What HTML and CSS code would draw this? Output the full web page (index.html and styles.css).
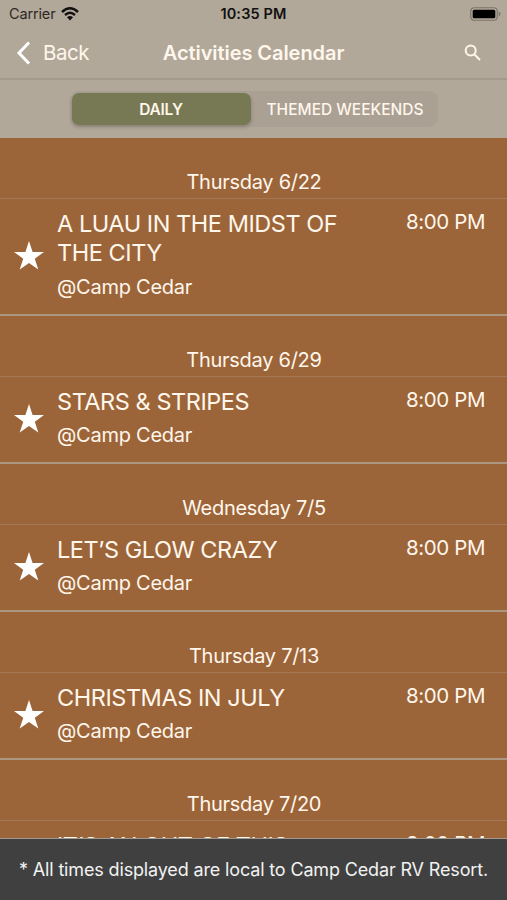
FILE: index.html
```html
<!DOCTYPE html>
<html lang="en">
<head>
    <meta charset="UTF-8">
    <meta name="viewport" content="width=device-width, initial-scale=1.0">
    <title>Activities Calendar</title>
    <link rel="stylesheet" href="styles.css">
</head>
<body>
    <svg class="sprite" width="0" height="0">
        <symbol id="star" viewBox="0 0 30 29">
            <path d="M15 0 L18.6 10.9 H30 L20.8 17.7 L24.3 28.6 L15 21.9 L5.7 28.6 L9.2 17.7 L0 10.9 H11.4 Z"/>
        </symbol>
    </svg>

    <div class="screen">
        <div class="status-bar">
            <div class="carrier">
                <span class="carrier-name">Carrier</span>
                <svg class="wifi" viewBox="0 0 18 14" width="18" height="14">
                    <path d="M1 5 Q9 -2.4 17 5" />
                    <path d="M4 8 Q9 3.4 14 8" />
                    <path class="dot" d="M6 10.3 Q9 7.6 12 10.3 L9 13.5 Z" />
                </svg>
            </div>
            <span class="clock">10:35 PM</span>
            <svg class="battery" viewBox="0 0 31 14" width="31" height="14">
                <rect class="shell" x="0.75" y="0.75" width="26.5" height="12.5" rx="3.5"/>
                <rect x="2.7" y="2.7" width="22.6" height="8.6" rx="1.5"/>
                <path class="cap" d="M28.7 4.5 Q30.5 5.3 30.5 7 Q30.5 8.7 28.7 9.5 Z"/>
            </svg>
        </div>

        <header class="nav-bar">
            <a class="back">
                <svg viewBox="0 0 15 24" width="15" height="24"><path d="M13 1.5 L3 12 L13 22.5"/></svg>
                <span>Back</span>
            </a>
            <h1>Activities Calendar</h1>
            <svg class="search" viewBox="0 0 17 17" width="17" height="17">
                <circle cx="6.7" cy="6.5" r="5"/>
                <path d="M10.3 10.3 L16 16"/>
            </svg>
        </header>

        <div class="tab-bar">
            <div class="segments">
                <span class="segment active">DAILY</span>
                <span class="segment">THEMED WEEKENDS</span>
            </div>
        </div>

        <main class="list">
            <section>
                <h2>Thursday 6/22</h2>
                <div class="event tall">
                    <svg class="star"><use href="#star"/></svg>
                    <div class="info">
                        <h3>A LUAU IN THE MIDST OF THE CITY</h3>
                        <p>@Camp Cedar</p>
                    </div>
                    <span class="time">8:00 PM</span>
                </div>
            </section>
            <section>
                <h2>Thursday 6/29</h2>
                <div class="event">
                    <svg class="star"><use href="#star"/></svg>
                    <div class="info">
                        <h3>STARS &amp; STRIPES</h3>
                        <p>@Camp Cedar</p>
                    </div>
                    <span class="time">8:00 PM</span>
                </div>
            </section>
            <section>
                <h2>Wednesday 7/5</h2>
                <div class="event">
                    <svg class="star"><use href="#star"/></svg>
                    <div class="info">
                        <h3>LET’S GLOW CRAZY</h3>
                        <p>@Camp Cedar</p>
                    </div>
                    <span class="time">8:00 PM</span>
                </div>
            </section>
            <section>
                <h2>Thursday 7/13</h2>
                <div class="event">
                    <svg class="star"><use href="#star"/></svg>
                    <div class="info">
                        <h3>CHRISTMAS IN JULY</h3>
                        <p>@Camp Cedar</p>
                    </div>
                    <span class="time">8:00 PM</span>
                </div>
            </section>
            <section>
                <h2>Thursday 7/20</h2>
                <div class="event next">
                    <div class="info">
                        <h3>IT’S AN OUT OF THIS</h3>
                    </div>
                    <span class="time">8:00 PM</span>
                </div>
            </section>
        </main>

        <footer>* All times displayed are local to Camp Cedar RV Resort.</footer>
    </div>
</body>
</html>
```

FILE: styles.css
```css
* {
    margin: 0;
    padding: 0;
    box-sizing: border-box;
}

body {
    font-family: Inter, "Liberation Sans", sans-serif;
    background: #9c6539;
    color: #fff6ec;
    overflow: hidden;
}

.sprite {
    display: block;
}

.screen {
    width: 507px;
    height: 900px;
    display: flex;
    flex-direction: column;
}

/* Status bar */
.status-bar {
    height: 27px;
    flex-shrink: 0;
    background: #b2a899;
    color: #111;
    display: grid;
    grid-template-columns: 1fr auto 1fr;
    align-items: center;
    padding: 0 8px;
    font-size: 14.5px;
}

.carrier {
    display: flex;
    align-items: center;
    gap: 6px;
    padding-left: 1px;
}

.carrier-name {
    color: #2c2926;
    letter-spacing: -0.15px;
}

.wifi path {
    fill: none;
    stroke: #111;
    stroke-width: 2.4;
}

.wifi .dot {
    fill: #111;
    stroke: none;
}

.clock {
    font-weight: 600;
    letter-spacing: 0.15px;
}

.battery {
    justify-self: end;
    margin-right: -2px;
}

.battery .shell {
    fill: none;
    stroke: #7b756b;
    stroke-width: 1.2;
}

.battery .cap {
    fill: #7b756b;
}

/* Navigation */
.nav-bar {
    height: 53px;
    flex-shrink: 0;
    background: #b2a899;
    border-bottom: 2px solid #a59b8d;
    display: grid;
    grid-template-columns: 1fr auto 1fr;
    align-items: center;
    padding: 0 16px;
}

.back {
    display: flex;
    align-items: center;
    gap: 12px;
    font-size: 20.5px;
    letter-spacing: -0.5px;
}

.back path {
    fill: none;
    stroke: #fff;
    stroke-width: 3;
}

.nav-bar h1 {
    font-size: 20px;
    font-weight: 600;
    letter-spacing: -0.06px;
}

.search {
    justify-self: end;
    margin-right: 10px;
    fill: none;
    stroke: #fff6ec;
    stroke-width: 2;
}

/* Segmented control */
.tab-bar {
    height: 58px;
    flex-shrink: 0;
    background: #b2a899;
    display: flex;
    justify-content: center;
    align-items: center;
}

.segments {
    width: 368px;
    height: 36px;
    padding: 2px;
    display: flex;
    background: #aaa093;
    border-radius: 9px;
}

.segment {
    flex: 1;
    display: flex;
    justify-content: center;
    align-items: center;
    padding-left: 4px;
    font-size: 15.5px;
    font-weight: 500;
    white-space: nowrap;
    border-radius: 7px;
}

.segment.active {
    flex: none;
    width: 179px;
    padding-left: 0;
    background: #777955;
    font-weight: 600;
    letter-spacing: -0.25px;
    box-shadow: 0 2px 4px rgba(0, 0, 0, 0.2);
}

/* Event list */
.list {
    flex: 1;
    min-height: 0;
    overflow: hidden;
}

.list h2 {
    height: 61px;
    padding: 30px 0 0 1px;
    border-bottom: 1px solid #a27856;
    font-size: 20px;
    font-weight: 400;
    letter-spacing: -0.28px;
    line-height: 28px;
    text-align: center;
}

.event {
    height: 87px;
    border-bottom: 2px solid #ab9780;
    display: flex;
    align-items: center;
    padding: 0 22px 0 14px;
}

.event.tall {
    height: 117px;
}

.star {
    width: 30px;
    height: 29px;
    margin-bottom: 2px;
    fill: #fff;
}

.info {
    flex: 1;
    align-self: flex-start;
    padding: 10px 50px 0 13px;
}

.info h3 {
    font-size: 23.5px;
    font-weight: 400;
    letter-spacing: -0.45px;
    line-height: 29px;
}

.info p {
    font-size: 20px;
    line-height: 28px;
    letter-spacing: -0.25px;
    margin-top: 5px;
}

.event.tall p {
    margin-top: 6px;
}

.time {
    align-self: flex-start;
    padding-top: 9px;
    font-size: 20.5px;
    letter-spacing: -0.4px;
    line-height: 28px;
}

/* Row scrolling in from under the footer */
.event.next .info {
    padding-left: 43px;
}

/* Time zone note */
footer {
    height: 62px;
    flex-shrink: 0;
    background: #404040;
    border-top: 1px solid #a09a92;
    color: #f2f2f2;
    font-size: 18px;
    letter-spacing: -0.15px;
    line-height: 62px;
    text-align: center;
    white-space: nowrap;
}
```
